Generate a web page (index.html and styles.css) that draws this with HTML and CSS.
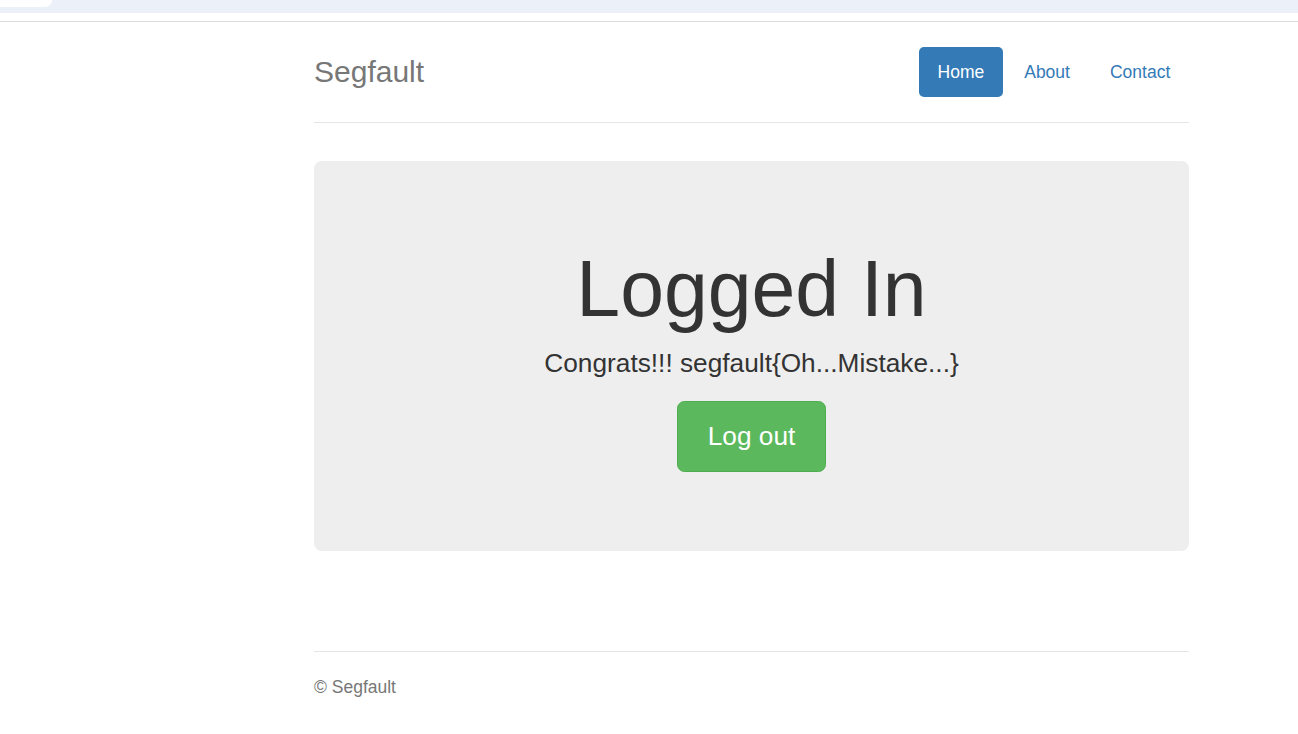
FILE: index.html
```html
<!DOCTYPE html>
<html lang="en">

<head>
  <meta charset="UTF-8">
  <meta name="viewport" content="width=device-width, initial-scale=1.0">
  <title>Segfault</title>
  <link rel="stylesheet" href="styles.css">
</head>

<body>
  <div class="browser-bar">
    <div class="browser-tab"></div>
  </div>

  <div class="container">
    <div class="header">
      <h3 class="brand">Segfault</h3>
      <ul class="nav-pills">
        <li class="active"><a href="#">Home</a></li>
        <li><a href="#">About</a></li>
        <li><a href="#">Contact</a></li>
      </ul>
    </div>

    <div class="jumbotron">
      <h1>Logged In</h1>
      <p class="lead">Congrats!!! segfault{Oh...Mistake...}</p>
      <p class="actions"><button class="logout-button">Log out</button></p>
    </div>

    <div class="footer">
      <p>&copy; Segfault</p>
    </div>
  </div>
</body>

</html>
```

FILE: styles.css
```css
body {
  font-family: "Liberation Sans", Arial, sans-serif;
  margin: 0;
  padding: 0;
  background-color: #fff;
  color: #333;
}

.browser-bar {
  height: 13px;
  background-color: #ecf1f9;
  margin-bottom: 8px;
  border-bottom: 0;
  position: relative;
}

.browser-bar::after {
  content: "";
  display: block;
  position: absolute;
  left: 0;
  right: 0;
  top: 21px;
  height: 1px;
  background-color: #dadce0;
}

.browser-tab {
  width: 52px;
  height: 7px;
  background-color: #fff;
  border-bottom-right-radius: 8px;
}

.container {
  width: 875px;
  margin-left: 314px;
  padding-top: 26px;
}

.header {
  display: flex;
  justify-content: space-between;
  align-items: center;
  padding-bottom: 25px;
  border-bottom: 1px solid #e5e5e5;
  margin-bottom: 38px;
}

.brand {
  margin: 0;
  font-size: 30px;
  font-weight: 500;
  line-height: 50px;
  color: #777;
}

.nav-pills {
  display: flex;
  list-style: none;
  margin: 0;
  padding: 0;
  gap: 2.5px;
}

.nav-pills a {
  display: block;
  padding: 12.5px 18.75px;
  line-height: 25px;
  font-size: 17.5px;
  color: #337ab7;
  text-decoration: none;
  border-radius: 5px;
}

.nav-pills .active a {
  background-color: #337ab7;
  color: #fff;
}

.jumbotron {
  background-color: #eee;
  border-radius: 7.5px;
  padding: 60px 75px;
  text-align: center;
}

.jumbotron h1 {
  margin: 25px 0 12.5px;
  font-size: 78.75px;
  font-weight: 500;
  line-height: 1.1;
  color: #333;
}

.jumbotron p {
  margin: 0 0 18.75px;
  font-size: 26.25px;
  line-height: 37.5px;
}

.logout-button {
  font-family: inherit;
  font-size: 26.25px;
  line-height: 37.5px;
  padding: 15.5px 29.5px;
  background-color: #5cb85c;
  border: 1.25px solid #4cae4c;
  color: #fff;
  border-radius: 7.5px;
  cursor: pointer;
  vertical-align: middle;
}

.footer {
  margin-top: 100px;
  padding-top: 23.75px;
  border-top: 1px solid #e5e5e5;
  color: #777;
}

.footer p {
  margin: 0 0 12.5px;
  font-size: 17.5px;
  line-height: 25px;
}
```
